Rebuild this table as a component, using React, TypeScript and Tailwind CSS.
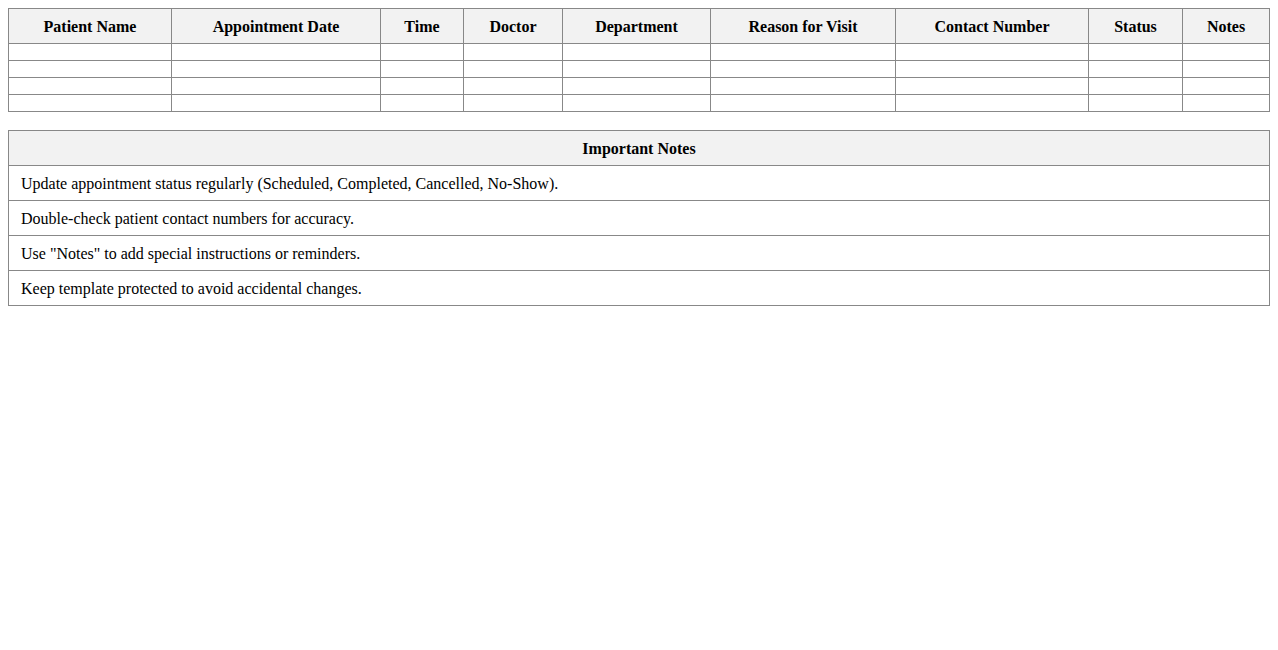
const columns = [
  { label: "Patient Name", w: "w-[163px]" },
  { label: "Appointment Date", w: "w-[209px]" },
  { label: "Time", w: "w-[83px]" },
  { label: "Doctor", w: "w-[99px]" },
  { label: "Department", w: "w-[148px]" },
  { label: "Reason for Visit", w: "w-[185px]" },
  { label: "Contact Number", w: "w-[193px]" },
  { label: "Status", w: "w-[94px]" },
  { label: "Notes", w: "w-[87px]" },
];

const notes = [
  "Update appointment status regularly (Scheduled, Completed, Cancelled, No-Show).",
  "Double-check patient contact numbers for accuracy.",
  'Use "Notes" to add special instructions or reminders.',
  "Keep template protected to avoid accidental changes.",
];

export default function App() {
  return (
    <div className="min-h-screen bg-white p-2 font-['Liberation_Serif','Times_New_Roman',serif] text-base text-black">
      <table className="w-full table-fixed border-collapse">
        <colgroup>
          {columns.map((c) => (
            <col key={c.label} className={c.w} />
          ))}
        </colgroup>
        <thead>
          <tr>
            {columns.map((c) => (
              <th
                key={c.label}
                className="border border-[#888] bg-[#f2f2f2] px-2 pt-[9px] pb-[7px] text-center font-bold leading-[18px]"
              >
                {c.label}
              </th>
            ))}
          </tr>
        </thead>
        <tbody>
          {[0, 1, 2, 3].map((r) => (
            <tr key={r}>
              {columns.map((c) => (
                <td key={c.label} className="h-[17px] border border-[#888] p-2" />
              ))}
            </tr>
          ))}
        </tbody>
      </table>

      <table className="mt-[18px] w-full border-collapse">
        <thead>
          <tr>
            <th className="border border-[#888] bg-[#f2f2f2] px-3 pt-[9px] pb-[7px] text-center font-bold leading-[18px]">
              Important Notes
            </th>
          </tr>
        </thead>
        <tbody>
          {notes.map((n) => (
            <tr key={n}>
              <td className="border border-[#888] px-3 pt-[9px] pb-[7px] text-left leading-[18px]">{n}</td>
            </tr>
          ))}
        </tbody>
      </table>
    </div>
  );
}
